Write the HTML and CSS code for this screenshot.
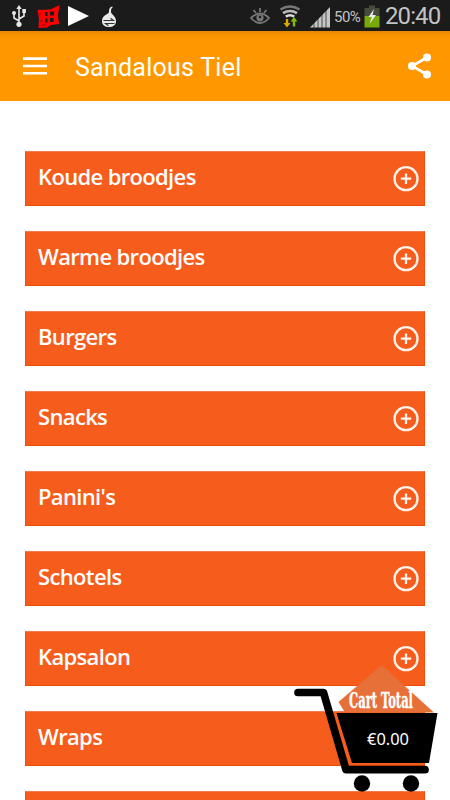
FILE: index.html
```html
<!DOCTYPE html>
<html lang="nl">
<head>
<meta charset="utf-8">
<title>Sandalous Tiel</title>
<link rel="stylesheet" href="styles.css">
</head>
<body>
<svg class="defs" width="0" height="0"><symbol id="plus" viewBox="0 0 26 26"><circle cx="13" cy="12.700" r="11.500" fill="none" stroke="#fff4ec" stroke-width="2.300"/><path d="M13 7.500v10.400M7.800 12.700h10.400" stroke="#fff4ec" stroke-width="2.300"/></symbol></svg>
<header class="status">
  <svg class="status-left" width="130" height="31" viewBox="0 0 130 31">
    <g fill="none" stroke="#e8e8e8" stroke-width="1.6"><path d="M19 8v16M19 21l-5-3v-4M19 19l5-3v-5"/></g>
    <g fill="#e8e8e8"><path d="M19 5l-2.700 4h5.400z"/><circle cx="19" cy="24.300" r="2.600"/><circle cx="14" cy="13" r="2"/><path d="M22.300 9h3.600v4h-3.600z"/></g>
    <path d="M37.500 10l13-.5L59.500 5l-1.500 10 1 9-8 1-4 2.500-8.500.5.500-9z" fill="#f00"/>
    <path d="M45 12h2.500v4H45zM50 11.500h4v4h-4zM45 18.500h2.500v4H45zM50 18h3.500v4H50z" fill="#1b1b1b"/>
    <path d="M39 14h2M40 21h3M41 25h5" stroke="#a00000"/>
    <path d="M68 6v20l21-10z" fill="#fff"/>
    <path d="M113 7c-3-1-4 2-4 5 0 2-7 3-7 9 0 4 3 6 7 6s7-2 7-6c0-5-5-7-5-9 0-2 0-4 2-5z" fill="#e9e9e9"/>
    <path d="M103.500 20.500h10l-3-2.300M114.500 23.500h-9l3 2.200" fill="none" stroke="#333" stroke-width="1.100"/>
  </svg>
  <div class="status-right">
    <svg width="84" height="31" viewBox="0 0 84 31">
      <g fill="none" stroke="#777" stroke-width="1.800"><path d="M1 18q9-9 18 0-9 10-18 0z"/><path d="M10 8v4M3.500 10l2.500 3M16.500 10l-2.500 3"/></g><circle cx="10" cy="17.800" r="3.600" fill="#777"/><circle cx="10" cy="17" r="1.300" fill="#1b1b1b"/>
      <g fill="none" stroke-width="2.600"><path d="M30.500 9.500q9.500-6 19 0" stroke="#777"/><path d="M33 13.200q7-4.500 14 0" stroke="#bbb"/><path d="M35.800 16.600q4.200-2.800 8.400 0" stroke="#ddd"/></g>
      <path d="M35.800 19h2.400v4h2.300L37 27.500 33.500 23h2.300z" fill="#d9a900"/><path d="M42.800 26.500h2.400v-5h2.300L44 17l-3.500 4.500h2.300z" fill="#83bd08"/>
      <path d="M60 27.500L80 7v20.500z" fill="#c5c5c5"/><path d="M64 20v8M68 16v12M72 12v16M76 9v19" stroke="#1b1b1b" stroke-width=".7"/>
    </svg>
    <span class="percent">50%</span>
    <svg class="battery" width="16" height="31" viewBox="0 0 16 31"><path d="M5 5.500h6v2.500h4.500v8H.5V8H5z" fill="#454c3b"/><path d="M.5 16h15v11.500H.5z" fill="#77a90b"/><path d="M10 9l-5.500 8h3.300L5.500 24l6.500-9H8.500z" fill="#eee"/></svg>
    <span class="clock">20:40</span>
  </div>
</header>
<nav class="appbar">
  <svg width="24" height="18" viewBox="0 0 24 18"><path d="M0 1.600h24M0 9h24M0 16.200h24" stroke="#fff" stroke-width="2.600"/></svg>
  <h1>Sandalous Tiel</h1>
  <svg class="share" width="24" height="26" viewBox="0 0 24 26"><path d="M19 4.500L4 13l15 8.500" fill="none" stroke="#fff" stroke-width="2.600"/><g fill="#fff"><circle cx="19" cy="4.500" r="4"/><circle cx="4" cy="13" r="4"/><circle cx="19" cy="21.500" r="4"/></g></svg>
</nav>
<main class="menu">
  <div class="row"><span>Koude broodjes</span><svg class="plus"><use href="#plus"/></svg></div>
  <div class="row"><span>Warme broodjes</span><svg class="plus"><use href="#plus"/></svg></div>
  <div class="row"><span>Burgers</span><svg class="plus"><use href="#plus"/></svg></div>
  <div class="row"><span>Snacks</span><svg class="plus"><use href="#plus"/></svg></div>
  <div class="row"><span>Panini's</span><svg class="plus"><use href="#plus"/></svg></div>
  <div class="row"><span>Schotels</span><svg class="plus"><use href="#plus"/></svg></div>
  <div class="row"><span>Kapsalon</span><svg class="plus"><use href="#plus"/></svg></div>
  <div class="row"><span>Wraps</span><svg class="plus"><use href="#plus"/></svg></div>
  <div class="row row-cut"></div>
</main>
<svg class="cart" width="165" height="145" viewBox="0 0 165 145">
  <path d="M96.500 10L149 57.500H60L53.500 47z" fill="#e76f38"/>
  <path d="M13 37.500h25.500L61 114.700h79" fill="none" stroke="#000" stroke-width="7.700" stroke-linecap="round" stroke-linejoin="round"/>
  <path d="M51.500 58h101l-8.500 50H67z" fill="#000"/>
  <circle cx="77" cy="128.500" r="8.200"/><circle cx="126" cy="128.500" r="8.200"/>
  <text class="cart-title" x="64" y="53" textLength="64" lengthAdjust="spacingAndGlyphs">Cart Total</text>
  <text class="cart-sum" x="82" y="90" textLength="42" lengthAdjust="spacingAndGlyphs">€0.00</text>
</svg>
</body>
</html>
```
FILE: styles.css
```css
* { box-sizing: border-box; }
body { margin: 0; height: 800px; overflow: hidden; background: #fff; font-family: Roboto, "Liberation Sans", sans-serif; color: #fff; }
.defs { position: absolute; }
.status { height: 31px; background: #1b1b1b; display: flex; justify-content: space-between; }
.status svg { display: block; flex: none; }
.status-right { display: flex; align-items: center; padding-right: 10px; color: #c3c3c3; }
.percent { font-size: 15px; width: 30px; padding-top: 3px; letter-spacing: -.5px; }
.battery { margin: 0 5px 0 0; }
.clock { font-size: 24px; width: 55px; line-height: 31px; padding-top: 2px; white-space: nowrap; letter-spacing: -.9px; }
.appbar { height: 70px; display: flex; align-items: center; padding: 0 18px 0 23px; background: linear-gradient(#e18706, #f89400 4px, #ff9800 10px); }
h1 { font-size: 25px; font-weight: 400; margin: 0 0 0 28px; line-height: 68px; padding-top: 3px; letter-spacing: .25px; }
.share { margin-left: auto; }
.menu { height: 699px; overflow: hidden; padding: 50px 25px 0; display: grid; gap: 25px; align-content: start; }
.row { height: 55px; background: #f65c1b; border: 1px solid #f24b09; border-top-color: #f07c50; display: flex; justify-content: space-between; align-items: center; padding: 0 5px 0 12px; }
.row-cut { height: 9px; border-bottom: 0; }
.row span { font-family: "Open Sans", sans-serif; font-size: 22px; font-weight: 600; line-height: 30px; margin-top: -6px; letter-spacing: -.65px; }
.plus { width: 26px; height: 26px; flex: none; }
.cart { position: absolute; left: 285px; top: 655px; }
.cart-title { font: bold 22px "DejaVu Serif Condensed", "DejaVu Serif", serif; fill: #fff; stroke: #fff; stroke-width: .4px; }
.cart-sum { font: 16px "Noto Sans", sans-serif; fill: #fff; }
```
